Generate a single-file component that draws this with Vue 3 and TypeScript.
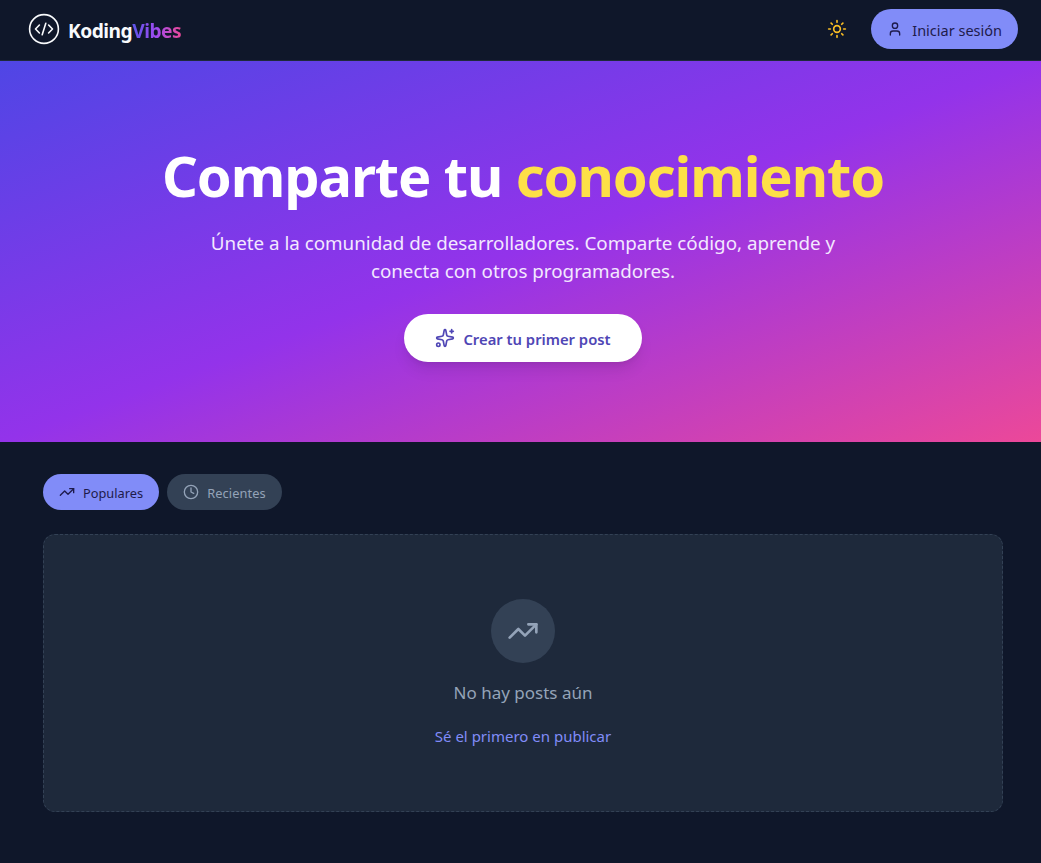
<script setup lang="ts">
const tabs = [
  { label: "Populares", active: true },
  { label: "Recientes", active: false },
];
</script>

<template>
  <div class="page">
    <header class="topbar">
      <a class="brand">
        <svg class="brand-icon" viewBox="0 0 32 32" fill="none" stroke="currentColor" stroke-width="1.6" stroke-linecap="round" stroke-linejoin="round">
          <circle cx="16" cy="16" r="14.4" />
          <path d="M11.4 12 7.5 16l3.9 4" />
          <path d="M20.6 12l3.9 4-3.9 4" />
          <path d="M17.8 10.2 14.2 21.8" />
        </svg>
        <span class="brand-name">Koding<span class="brand-accent">Vibes</span></span>
      </a>
      <div class="topbar-actions">
        <button class="theme-btn" type="button" aria-label="Tema">
          <svg class="icon-sun" viewBox="0 0 24 24" fill="none" stroke="currentColor" stroke-width="2" stroke-linecap="round" stroke-linejoin="round">
            <circle cx="12" cy="12" r="4" />
            <path d="M12 2v2" /><path d="M12 20v2" />
            <path d="m4.93 4.93 1.41 1.41" /><path d="m17.66 17.66 1.41 1.41" />
            <path d="M2 12h2" /><path d="M20 12h2" />
            <path d="m6.34 17.66-1.41 1.41" /><path d="m19.07 4.93-1.41 1.41" />
          </svg>
        </button>
        <button class="login-btn" type="button">
          <svg class="icon-16" viewBox="0 0 24 24" fill="none" stroke="currentColor" stroke-width="2" stroke-linecap="round" stroke-linejoin="round">
            <path d="M19 21v-2a4 4 0 0 0-4-4H9a4 4 0 0 0-4 4v2" />
            <circle cx="12" cy="7" r="4" />
          </svg>
          <span class="btn-label">Iniciar sesión</span>
        </button>
      </div>
    </header>

    <section class="hero">
      <h1>Comparte tu <span class="highlight">conocimiento</span></h1>
      <p>Únete a la comunidad de desarrolladores. Comparte código, aprende y conecta con otros programadores.</p>
      <button class="cta" type="button">
        <svg class="icon-20" viewBox="0 0 24 24" fill="none" stroke="currentColor" stroke-width="2" stroke-linecap="round" stroke-linejoin="round">
          <path d="M11.017 2.814a1 1 0 0 1 1.966 0l1.051 5.558a2 2 0 0 0 1.594 1.594l5.558 1.051a1 1 0 0 1 0 1.966l-5.558 1.051a2 2 0 0 0-1.594 1.594l-1.051 5.558a1 1 0 0 1-1.966 0l-1.051-5.558a2 2 0 0 0-1.594-1.594l-5.558-1.051a1 1 0 0 1 0-1.966l5.558-1.051a2 2 0 0 0 1.594-1.594z" />
          <path d="M20 2v4" /><path d="M22 4h-4" />
          <circle cx="4" cy="20" r="2" />
        </svg>
        <span class="btn-label">Crear tu primer post</span>
      </button>
    </section>

    <main class="content">
      <div class="tabs">
        <button v-for="tab in tabs" :key="tab.label" class="tab" :class="{ active: tab.active }" type="button">
          <svg v-if="tab.active" class="icon-16" viewBox="0 0 24 24" fill="none" stroke="currentColor" stroke-width="2" stroke-linecap="round" stroke-linejoin="round">
            <path d="M16 7h6v6" /><path d="m22 7-8.5 8.5-5-5L2 17" />
          </svg>
          <svg v-else class="icon-16" viewBox="0 0 24 24" fill="none" stroke="currentColor" stroke-width="2" stroke-linecap="round" stroke-linejoin="round">
            <circle cx="12" cy="12" r="10" /><path d="M12 6v6l4 2" />
          </svg>
          <span class="btn-label">{{ tab.label }}</span>
        </button>
      </div>

      <div class="empty">
        <div class="empty-icon">
          <svg viewBox="0 0 24 24" fill="none" stroke="currentColor" stroke-width="2" stroke-linecap="round" stroke-linejoin="round">
            <path d="M16 7h6v6" /><path d="m22 7-8.5 8.5-5-5L2 17" />
          </svg>
        </div>
        <p class="empty-title">No hay posts aún</p>
        <a class="empty-link">Sé el primero en publicar</a>
      </div>
    </main>
  </div>
</template>

<style>
html,
body {
  margin: 0;
  background: #0f172a;
}
</style>

<style scoped>
.page {
  min-height: 863px;
  background: #0f172a;
  font-family: "Noto Sans", "Open Sans", sans-serif;
  overflow: hidden;
}

button {
  font-family: inherit;
  border: 0;
  cursor: pointer;
}

.btn-label {
  padding-top: 2px;
}

.icon-16 {
  width: 16px;
  height: 16px;
  flex: none;
}

.icon-20 {
  width: 20px;
  height: 20px;
  flex: none;
}

.topbar {
  height: 61px;
  box-sizing: border-box;
  display: flex;
  align-items: center;
  justify-content: space-between;
  padding: 0 23px 2px 28px;
  background: #0f172a;
  border-bottom: 1px solid #1e293b;
}

.brand {
  display: flex;
  align-items: center;
  gap: 8px;
  color: #f8fafc;
}

.brand-icon {
  width: 32px;
  height: 32px;
}

.brand-name {
  padding-top: 2px;
  font-size: 19.2px;
  font-weight: 700;
  letter-spacing: -0.5px;
}

.brand-accent {
  background: linear-gradient(90deg, #5b54e8, #a04cf0, #ec4899);
  -webkit-background-clip: text;
  background-clip: text;
  color: transparent;
}

.topbar-actions {
  display: flex;
  align-items: center;
  gap: 14px;
}

.theme-btn {
  width: 40px;
  height: 40px;
  display: flex;
  align-items: center;
  justify-content: center;
  background: transparent;
  color: #fbbf24;
  padding: 0;
}

.icon-sun {
  width: 20px;
  height: 20px;
}

.login-btn {
  height: 40px;
  display: flex;
  align-items: center;
  gap: 9px;
  padding: 0 16px;
  border-radius: 999px;
  background: #818cf8;
  color: #1e1b4b;
  font-size: 14.5px;
}

.hero {
  height: 381px;
  box-sizing: border-box;
  padding: 78px 0 0 5px;
  display: flex;
  flex-direction: column;
  align-items: center;
  text-align: center;
  color: #fff;
  background: linear-gradient(to bottom right, #4f46e5 0%, #9333ea 50%, #ec4899 100%);
}

.hero h1 {
  margin: 0;
  font-size: 56px;
  line-height: 72px;
  font-weight: 700;
  letter-spacing: -1.1px;
}

.highlight {
  color: #fde047;
}

.hero p {
  margin: 18px 0 0;
  max-width: 640px;
  font-size: 18.8px;
  line-height: 28px;
  color: #f3e8ff;
}

.cta {
  margin-top: 29px;
  height: 48px;
  display: flex;
  align-items: center;
  gap: 8px;
  padding: 0 31px;
  border-radius: 999px;
  background: #fff;
  color: #4f46b5;
  font-size: 14.8px;
  font-weight: 600;
  box-shadow: 0 10px 15px -3px rgba(0, 0, 0, 0.1), 0 4px 6px -4px rgba(0, 0, 0, 0.1);
}

.content {
  padding: 32px 38px 0 43px;
}

.tabs {
  display: flex;
  gap: 8px;
}

.tab {
  height: 36px;
  display: flex;
  align-items: center;
  gap: 8px;
  padding: 0 16px;
  border-radius: 999px;
  font-size: 12.8px;
  letter-spacing: 0.1px;
  background: #334155;
  color: #94a3b8;
}

.tab.active {
  background: #818cf8;
  color: #1e1b4b;
  letter-spacing: 0;
}

.empty {
  margin-top: 24px;
  height: 278px;
  box-sizing: border-box;
  padding-top: 64px;
  display: flex;
  flex-direction: column;
  align-items: center;
  background: #1e293b;
  border: 1px dashed #334155;
  border-radius: 12px;
}

.empty-icon {
  width: 64px;
  height: 64px;
  border-radius: 50%;
  display: flex;
  align-items: center;
  justify-content: center;
  background: #334155;
  color: #94a3b8;
}

.empty-icon svg {
  width: 32px;
  height: 32px;
}

.empty-title {
  margin: 17px 0 0;
  font-size: 17px;
  line-height: 26px;
  color: #94a3b8;
}

.empty-link {
  margin-top: 20px;
  font-size: 15px;
  line-height: 20px;
  color: #818cf8;
}
</style>
